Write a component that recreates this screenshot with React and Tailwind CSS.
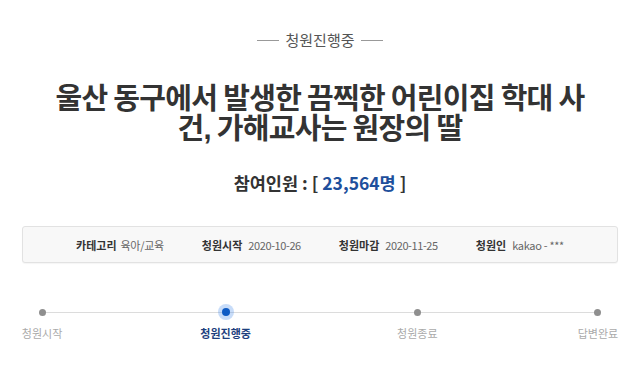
import React from "react";

export default function App() {
  return (
    <div className="w-[640px] h-[374px] bg-white overflow-hidden font-['Noto_Sans_CJK_KR',sans-serif] text-[#333]">
      <div className="flex items-center justify-center pt-[31px]">
        <div className="w-[22px] h-px bg-[#999]" />
        <span className="mx-[6px] text-[15px] leading-[18px] text-[#555]">청원진행중</span>
        <div className="w-[22px] h-px bg-[#999]" />
      </div>
      <h1 className="mt-[32px] text-center text-[29px] leading-[30px] font-bold text-[#333] tracking-[-0.7px]">
        울산 동구에서 발생한 끔찍한 어린이집 학대 사<br />건<span className="font-['Liberation_Sans',sans-serif]">,</span> 가해교사는 원장의 딸
      </h1>
      <div className="mt-[28px] text-center text-[17.5px] leading-[22px] font-bold text-[#333]">
        참여인원 : [ <span className="text-[#1e4f9c]">23,564명</span> ]
      </div>
      <div className="mx-[22px] mt-[32px] h-[37px] rounded-[3px] border border-[#e2e2e2] bg-[#f8f8f8] shadow-[0_1px_1px_rgba(0,0,0,0.04)] flex items-center justify-center gap-[38px] text-[11px] leading-[14px]">
        <div className="flex items-center gap-[4px]">
          <span className="font-bold text-[#333]">카테고리</span>
          <span className="text-[#666] tracking-[-0.3px]">육아/교육</span>
        </div>
        <div className="flex items-center gap-[6px]">
          <span className="font-bold text-[#333]">청원시작</span>
          <span className="text-[#666] tracking-[-0.4px]">2020-10-26</span>
        </div>
        <div className="flex items-center gap-[6px]">
          <span className="font-bold text-[#333]">청원마감</span>
          <span className="text-[#666] tracking-[-0.4px]">2020-11-25</span>
        </div>
        <div className="flex items-center gap-[6px]">
          <span className="font-bold text-[#333]">청원인</span>
          <span className="text-[#666] tracking-[-0.3px]">kakao - ***</span>
        </div>
      </div>
      <div className="relative mx-[22px] mt-[41px]">
        <div className="absolute left-[20px] right-[20px] top-[8px] h-px bg-[#dcdcdc]" />
        <div className="relative flex justify-between">
          <div className="flex flex-col items-center w-[40px]">
            <div className="h-[16px] flex items-center"><div className="w-[7px] h-[7px] rounded-full bg-[#8f8f8f]" /></div>
            <span className="mt-[6px] whitespace-nowrap text-[11px] leading-[15px] text-[#aaa]">청원시작</span>
          </div>
          <div className="flex flex-col items-center w-[62px]">
            <div className="h-[16px] flex items-center"><div className="w-[8px] h-[8px] rounded-full bg-[#0e5bc4] shadow-[0_0_0_4px_rgba(70,140,235,0.3)]" /></div>
            <span className="mt-[6px] whitespace-nowrap text-[11px] leading-[15px] font-bold text-[#1d3f7e]">청원진행중</span>
          </div>
          <div className="flex flex-col items-center w-[56px]">
            <div className="h-[16px] flex items-center"><div className="w-[7px] h-[7px] rounded-full bg-[#8f8f8f]" /></div>
            <span className="mt-[6px] whitespace-nowrap text-[11px] leading-[15px] text-[#aaa]">청원종료</span>
          </div>
          <div className="flex flex-col items-center w-[40px]">
            <div className="h-[16px] flex items-center"><div className="w-[7px] h-[7px] rounded-full bg-[#8f8f8f]" /></div>
            <span className="mt-[6px] whitespace-nowrap text-[11px] leading-[15px] text-[#aaa]">답변완료</span>
          </div>
        </div>
      </div>
    </div>
  );
}
